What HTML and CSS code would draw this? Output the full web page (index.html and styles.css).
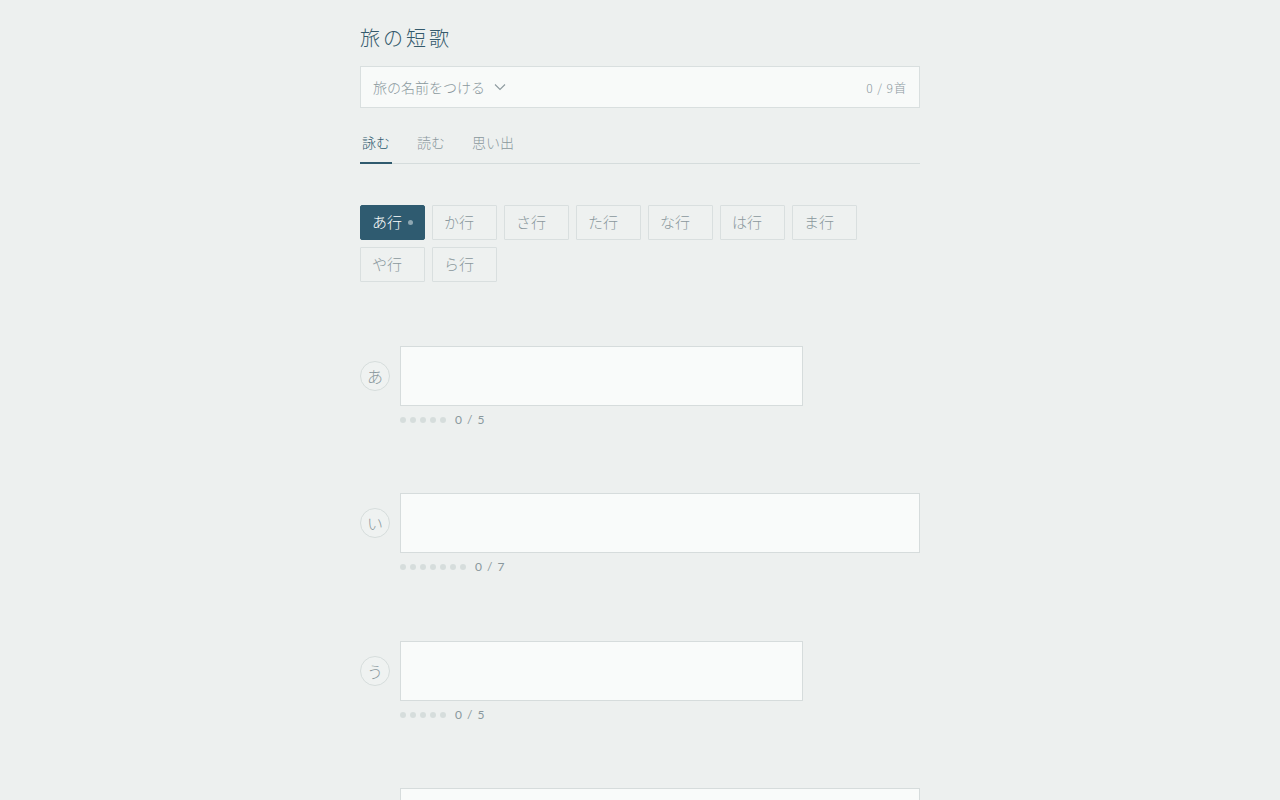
FILE: index.html
```html
<!DOCTYPE html>
<html lang="ja">
<head>
<meta charset="utf-8">
<title>旅の短歌</title>
<link rel="stylesheet" href="styles.css">
</head>
<body>
<main class="page">
  <h1 class="title">旅の短歌</h1>

  <div class="trip">
    <button class="trip-name" type="button">旅の名前をつける
      <svg class="chev" width="12" height="8" viewBox="0 0 12 8"><path d="M1 1.5 L6 6.5 L11 1.5" fill="none" stroke="#8d9a9f" stroke-width="1.1"/></svg>
    </button>
    <span class="trip-count">0 / 9首</span>
  </div>

  <nav class="tabs">
    <a class="tab active">詠む</a>
    <a class="tab">読む</a>
    <a class="tab">思い出</a>
  </nav>

  <div class="rows">
    <button class="row-btn active" type="button">あ行<span class="dot"></span></button>
    <button class="row-btn" type="button">か行</button>
    <button class="row-btn" type="button">さ行</button>
    <button class="row-btn" type="button">た行</button>
    <button class="row-btn" type="button">な行</button>
    <button class="row-btn" type="button">は行</button>
    <button class="row-btn" type="button">ま行</button>
    <button class="row-btn" type="button">や行</button>
    <button class="row-btn" type="button">ら行</button>
  </div>

  <section class="verses">
    <div class="verse">
      <span class="kana">あ</span>
      <div class="verse-body">
        <textarea class="line w5"></textarea>
        <div class="meta"><span class="dots"><i></i><i></i><i></i><i></i><i></i></span><span class="count">0 / 5</span></div>
      </div>
    </div>
    <div class="verse">
      <span class="kana">い</span>
      <div class="verse-body">
        <textarea class="line w7"></textarea>
        <div class="meta"><span class="dots"><i></i><i></i><i></i><i></i><i></i><i></i><i></i></span><span class="count">0 / 7</span></div>
      </div>
    </div>
    <div class="verse">
      <span class="kana">う</span>
      <div class="verse-body">
        <textarea class="line w5"></textarea>
        <div class="meta"><span class="dots"><i></i><i></i><i></i><i></i><i></i></span><span class="count">0 / 5</span></div>
      </div>
    </div>
    <div class="verse">
      <span class="kana">え</span>
      <div class="verse-body">
        <textarea class="line w7"></textarea>
        <div class="meta"><span class="dots"><i></i><i></i><i></i><i></i><i></i><i></i><i></i></span><span class="count">0 / 7</span></div>
      </div>
    </div>
    <div class="verse">
      <span class="kana">お</span>
      <div class="verse-body">
        <textarea class="line w7"></textarea>
        <div class="meta"><span class="dots"><i></i><i></i><i></i><i></i><i></i><i></i><i></i></span><span class="count">0 / 7</span></div>
      </div>
    </div>
  </section>
</main>
</body>
</html>
```

FILE: styles.css
```css
* { box-sizing: border-box; }

html, body {
  margin: 0;
  padding: 0;
  background: #edf0ef;
  font-family: "Noto Sans CJK JP", "Noto Sans", sans-serif;
  font-weight: 300;
  color: #8a989d;
}

.page {
  width: 560px;
  margin: 0 auto;
  padding-top: 24px;
  padding-bottom: 60px;
}

.title {
  margin: 0;
  font-size: 20px;
  line-height: 28px;
  font-weight: 300;
  letter-spacing: 3px;
  color: #345a6c;
}

.trip {
  margin-top: 14px;
  height: 42px;
  border: 1px solid #d9dfdf;
  background: #f8faf9;
  display: flex;
  align-items: center;
  justify-content: space-between;
  padding: 0 12px;
}

.trip-name {
  border: 0;
  background: none;
  padding: 0;
  font: inherit;
  font-size: 14px;
  color: #8a989d;
  display: flex;
  align-items: center;
  gap: 9px;
  cursor: pointer;
}

.chev { display: block; }

.trip-count {
  font-size: 12px;
  letter-spacing: 1px;
  color: #8a989d;
}

.tabs {
  margin-top: 20px;
  display: flex;
  gap: 23px;
  border-bottom: 1px solid #d5dcdc;
}

.tab {
  padding: 4px 2px 10px;
  line-height: 20px;
  font-size: 14px;
  color: #8a989d;
  border-bottom: 2px solid transparent;
  margin-bottom: -1px;
  cursor: pointer;
}

.tab.active {
  color: #2f5a6e;
  border-bottom-color: #2f5a6e;
}

.rows {
  margin-top: 41px;
  display: flex;
  flex-wrap: wrap;
  gap: 7px;
}

.row-btn {
  width: 65px;
  height: 35px;
  border: 1px solid #d9dfdf;
  background: #eef1f0;
  font: inherit;
  font-size: 15px;
  line-height: 20px;
  color: #8a989d;
  text-align: left;
  padding: 0 11px 2px;
  display: flex;
  align-items: center;
  gap: 6px;
  border-radius: 1px;
  cursor: pointer;
}

.row-btn.active {
  background: #2f5b70;
  border-color: #2f5b70;
  color: #ffffff;
  border-radius: 2px;
}

.row-btn .dot {
  width: 5px;
  height: 5px;
  margin-top: 2px;
  border-radius: 50%;
  background: #8ea7b2;
}

.verses {
  margin-top: 64px;
  display: flex;
  flex-direction: column;
  gap: 67.4px;
}

.verse {
  display: flex;
  gap: 10px;
  align-items: flex-start;
}

.kana {
  width: 30px;
  height: 30px;
  margin-top: 15px;
  border-radius: 50%;
  border: 1px solid #d6dddc;
  background: #eff2f1;
  display: flex;
  align-items: center;
  justify-content: center;
  font-size: 16px;
  color: #8a989d;
  flex-shrink: 0;
}

.verse-body { flex: 1; }

.line {
  display: block;
  height: 60px;
  border: 1px solid #d6dcdc;
  background: #f9fbfa;
  resize: none;
  font: inherit;
  font-size: 18px;
  padding: 8px 12px;
  outline: none;
}

.line.w5 { width: 403px; }
.line.w7 { width: 520px; }

.meta {
  margin-top: 8px;
  height: 12px;
  display: flex;
  align-items: center;
  gap: 9px;
}

.dots {
  display: flex;
  gap: 4px;
}

.dots i {
  width: 6px;
  height: 6px;
  border-radius: 50%;
  background: #d6dddc;
}

.count {
  font-size: 12px;
  line-height: 12px;
  letter-spacing: 1px;
  color: #8a989d;
  font-family: "Lato", "Noto Sans", sans-serif;
  font-weight: 400;
}
```
